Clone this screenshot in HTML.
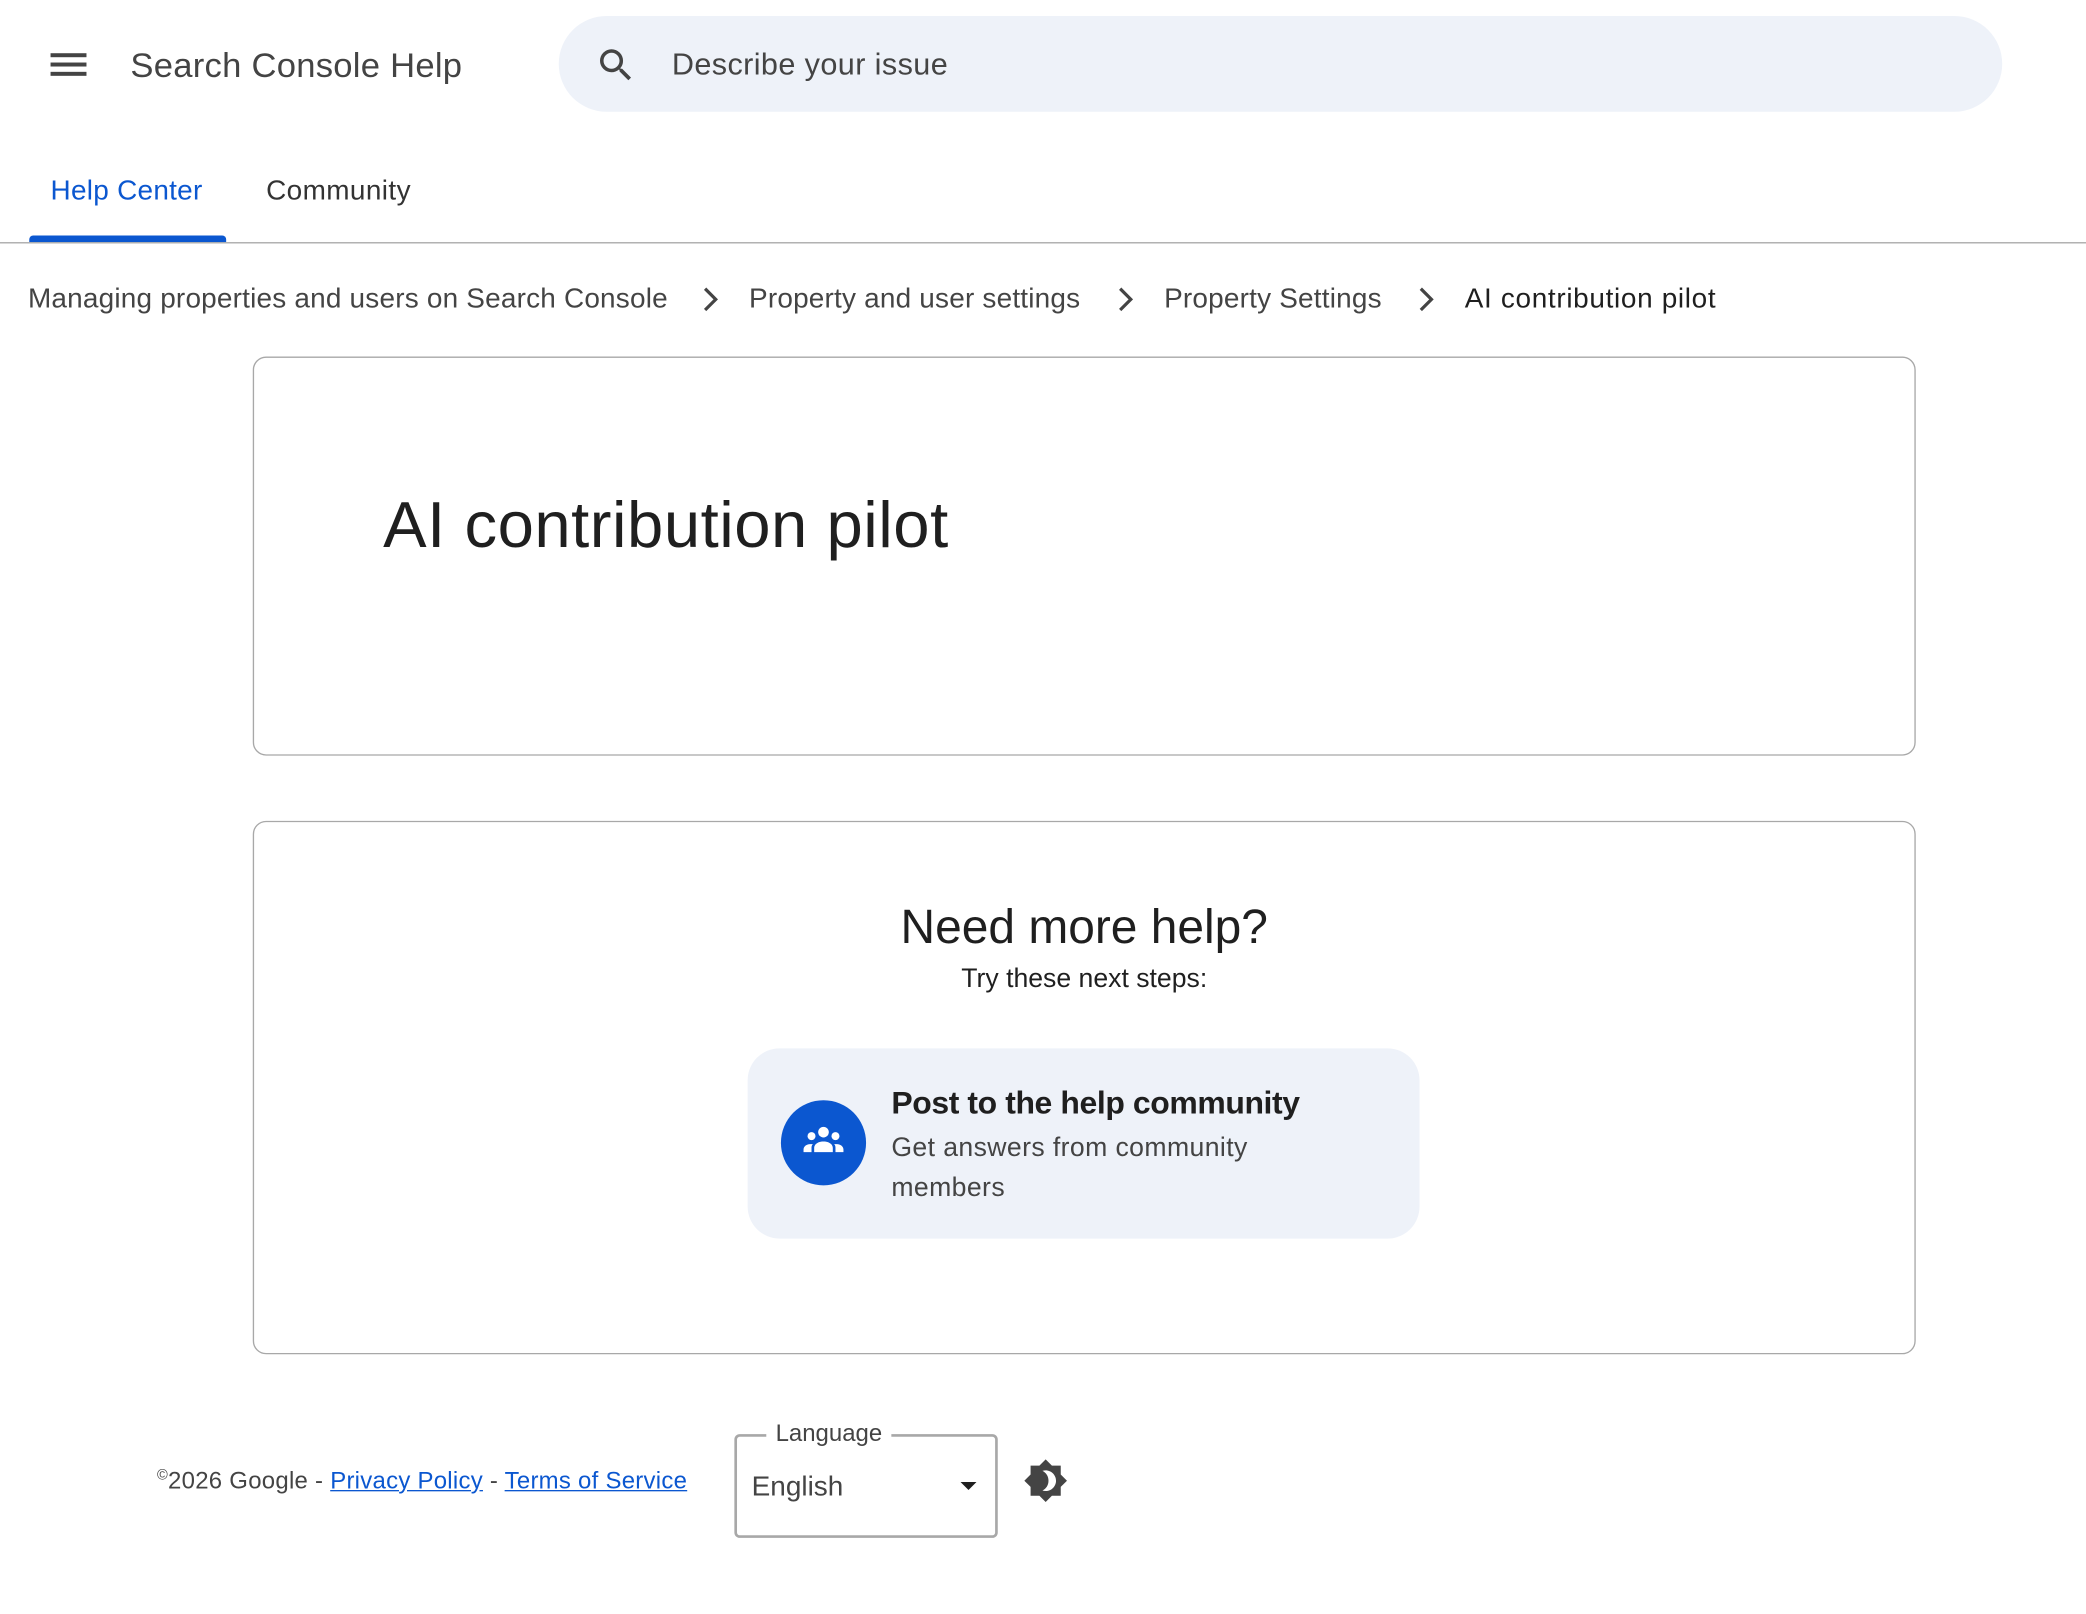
<!DOCTYPE html>
<html><head><meta charset="utf-8"><style>
html,body{margin:0;padding:0;background:#fff;overflow:hidden}
body{width:2086px;height:1614px}
#w{position:absolute;left:0;top:0;width:1568px;height:1213px;transform:scale(1.33036);transform-origin:0 0;font-family:"Liberation Sans",Arial,sans-serif;color:#1f1f1f}
.a{position:absolute;white-space:nowrap}
.bc{font-size:21px;color:#444;top:213px;letter-spacing:0.15px}
.card{position:absolute;left:190px;width:1248px;border:1px solid #a8a8a8;border-radius:10px}
</style></head><body><div id="w">
<div class="a" style="left:38px;top:40px;width:27px;height:3px;background:#444;box-shadow:0 7px 0 #444,0 14px 0 #444"></div>
<div class="a" style="left:98px;top:34px;font-size:26px;color:#444;letter-spacing:0.2px">Search Console Help</div>
<div class="a" style="left:420px;top:12px;width:1085px;height:72px;border-radius:36px;background:#eef2f9"></div>
<svg class="a" style="left:447px;top:33px" width="32" height="32" viewBox="0 0 24 24"><path fill="#444" d="M15.5 14h-.79l-.28-.27A6.47 6.47 0 0016 9.5 6.5 6.5 0 109.5 16c1.61 0 3.090-.59 4.23-1.57l.27.28v.79l5 4.99L20.49 19l-4.99-5zm-6 0C7.01 14 5 11.99 5 9.5S7.01 5 9.5 5 14 7.01 14 9.5 11.99 14 9.5 14z"/></svg>
<div class="a" style="left:505px;top:35px;font-size:23px;color:#444;letter-spacing:0.3px">Describe your issue</div>
<div class="a" style="left:38px;top:132px;font-size:21px;color:#0b57d0;letter-spacing:0.2px">Help Center</div>
<div class="a" style="left:200px;top:132px;font-size:21px;color:#333;letter-spacing:0.3px">Community</div>
<div class="a" style="left:22px;top:177px;width:148px;height:5px;background:#0b57d0;border-radius:3px 3px 0 0"></div>
<div class="a" style="left:0;top:182px;width:1568px;height:1px;background:#a8a8a8"></div>
<div class="a bc" style="left:21px">Managing properties and users on Search Console</div>
<div class="a bc" style="left:563px">Property and user settings</div>
<div class="a bc" style="left:875px">Property Settings</div>
<div class="a bc" style="left:1101px;color:#1f1f1f;letter-spacing:0.5px">AI contribution pilot</div>
<svg class="a" style="left:524px;top:213px" width="20" height="24" viewBox="0 0 20 24"><path d="M6 4l8 8-8 8" stroke="#444" stroke-width="2.4" fill="none"/></svg>
<svg class="a" style="left:836px;top:213px" width="20" height="24" viewBox="0 0 20 24"><path d="M6 4l8 8-8 8" stroke="#444" stroke-width="2.4" fill="none"/></svg>
<svg class="a" style="left:1062px;top:213px" width="20" height="24" viewBox="0 0 20 24"><path d="M6 4l8 8-8 8" stroke="#444" stroke-width="2.4" fill="none"/></svg>
<div class="card" style="top:268px;height:298px"></div>
<div class="a" style="left:288px;top:367px;font-size:49px;color:#1f1f1f;letter-spacing:0.4px">AI contribution pilot</div>
<div class="card" style="top:617px;height:399px"></div>
<div class="a" style="left:190px;width:1250px;text-align:center;top:676px;font-size:36px">Need more help?</div>
<div class="a" style="left:190px;width:1250px;text-align:center;top:725px;font-size:20px">Try these next steps:</div>
<div class="a" style="left:562px;top:788px;width:505px;height:143px;border-radius:24px;background:#eef2f9"></div>
<svg class="a" style="left:586px;top:826px" width="66" height="66" viewBox="0 0 66 66"><circle cx="33" cy="33" r="32" fill="#0b57d0"/><circle cx="33" cy="25" r="4" fill="#fff"/><circle cx="24" cy="28" r="3" fill="#fff"/><circle cx="42" cy="28" r="3" fill="#fff"/><path d="M26 40v-3c0-3 3-5 7-5s7 2 7 5v3z M18 40v-2c0-2 2-4 5-4h2c-1 1-1 2-1 3v3z M48 40v-2c0-2-2-4-5-4h-2c1 1 1 2 1 3v3z" fill="#fff"/></svg>
<div class="a" style="left:670px;top:816px;font-size:24px;font-weight:bold;color:#1f1f1f;letter-spacing:-0.3px">Post to the help community</div>
<div class="a" style="left:670px;top:848px;font-size:20px;color:#444;line-height:30px;white-space:normal;width:330px;letter-spacing:0.3px">Get answers from community members</div>
<div class="a" style="left:118px;top:1103px;font-size:18px;color:#444;letter-spacing:0.2px"><sup style="font-size:11px">©</sup>2026 Google - <u style="color:#0b57d0">Privacy Policy</u> - <u style="color:#0b57d0">Terms of Service</u></div>
<div class="a" style="left:552px;top:1078px;width:194px;height:74px;border:2px solid #a8a8a8;border-radius:4px"></div>
<div class="a" style="left:576px;top:1067px;padding:0 7px;background:#fff;font-size:18px;color:#444">Language</div>
<div class="a" style="left:565px;top:1106px;font-size:21px;color:#444">English</div>
<div class="a" style="left:722px;top:1114px;border-left:6px solid transparent;border-right:6px solid transparent;border-top:6px solid #1f1f1f"></div>
<svg class="a" style="left:769px;top:1096px" width="34" height="34" viewBox="0 0 24 24"><path fill="#444" d="M20 8.69V4h-4.69L12 .69 8.69 4H4v4.690L.69 12 4 15.31V20h4.69L12 23.31 15.31 20H20v-4.69L23.31 12 20 8.69z"/><path fill="#fff" d="M12 6.5c3 0 5.5 2.5 5.5 5.5s-2.5 5.5-5.5 5.5c-.6 0-1.2-.1-1.7-.3 2-1 3.2-2.9 3.2-5.2s-1.2-4.2-3.2-5.2c.5-.2 1.1-.3 1.7-.3z"/></svg>
</div></body></html>
